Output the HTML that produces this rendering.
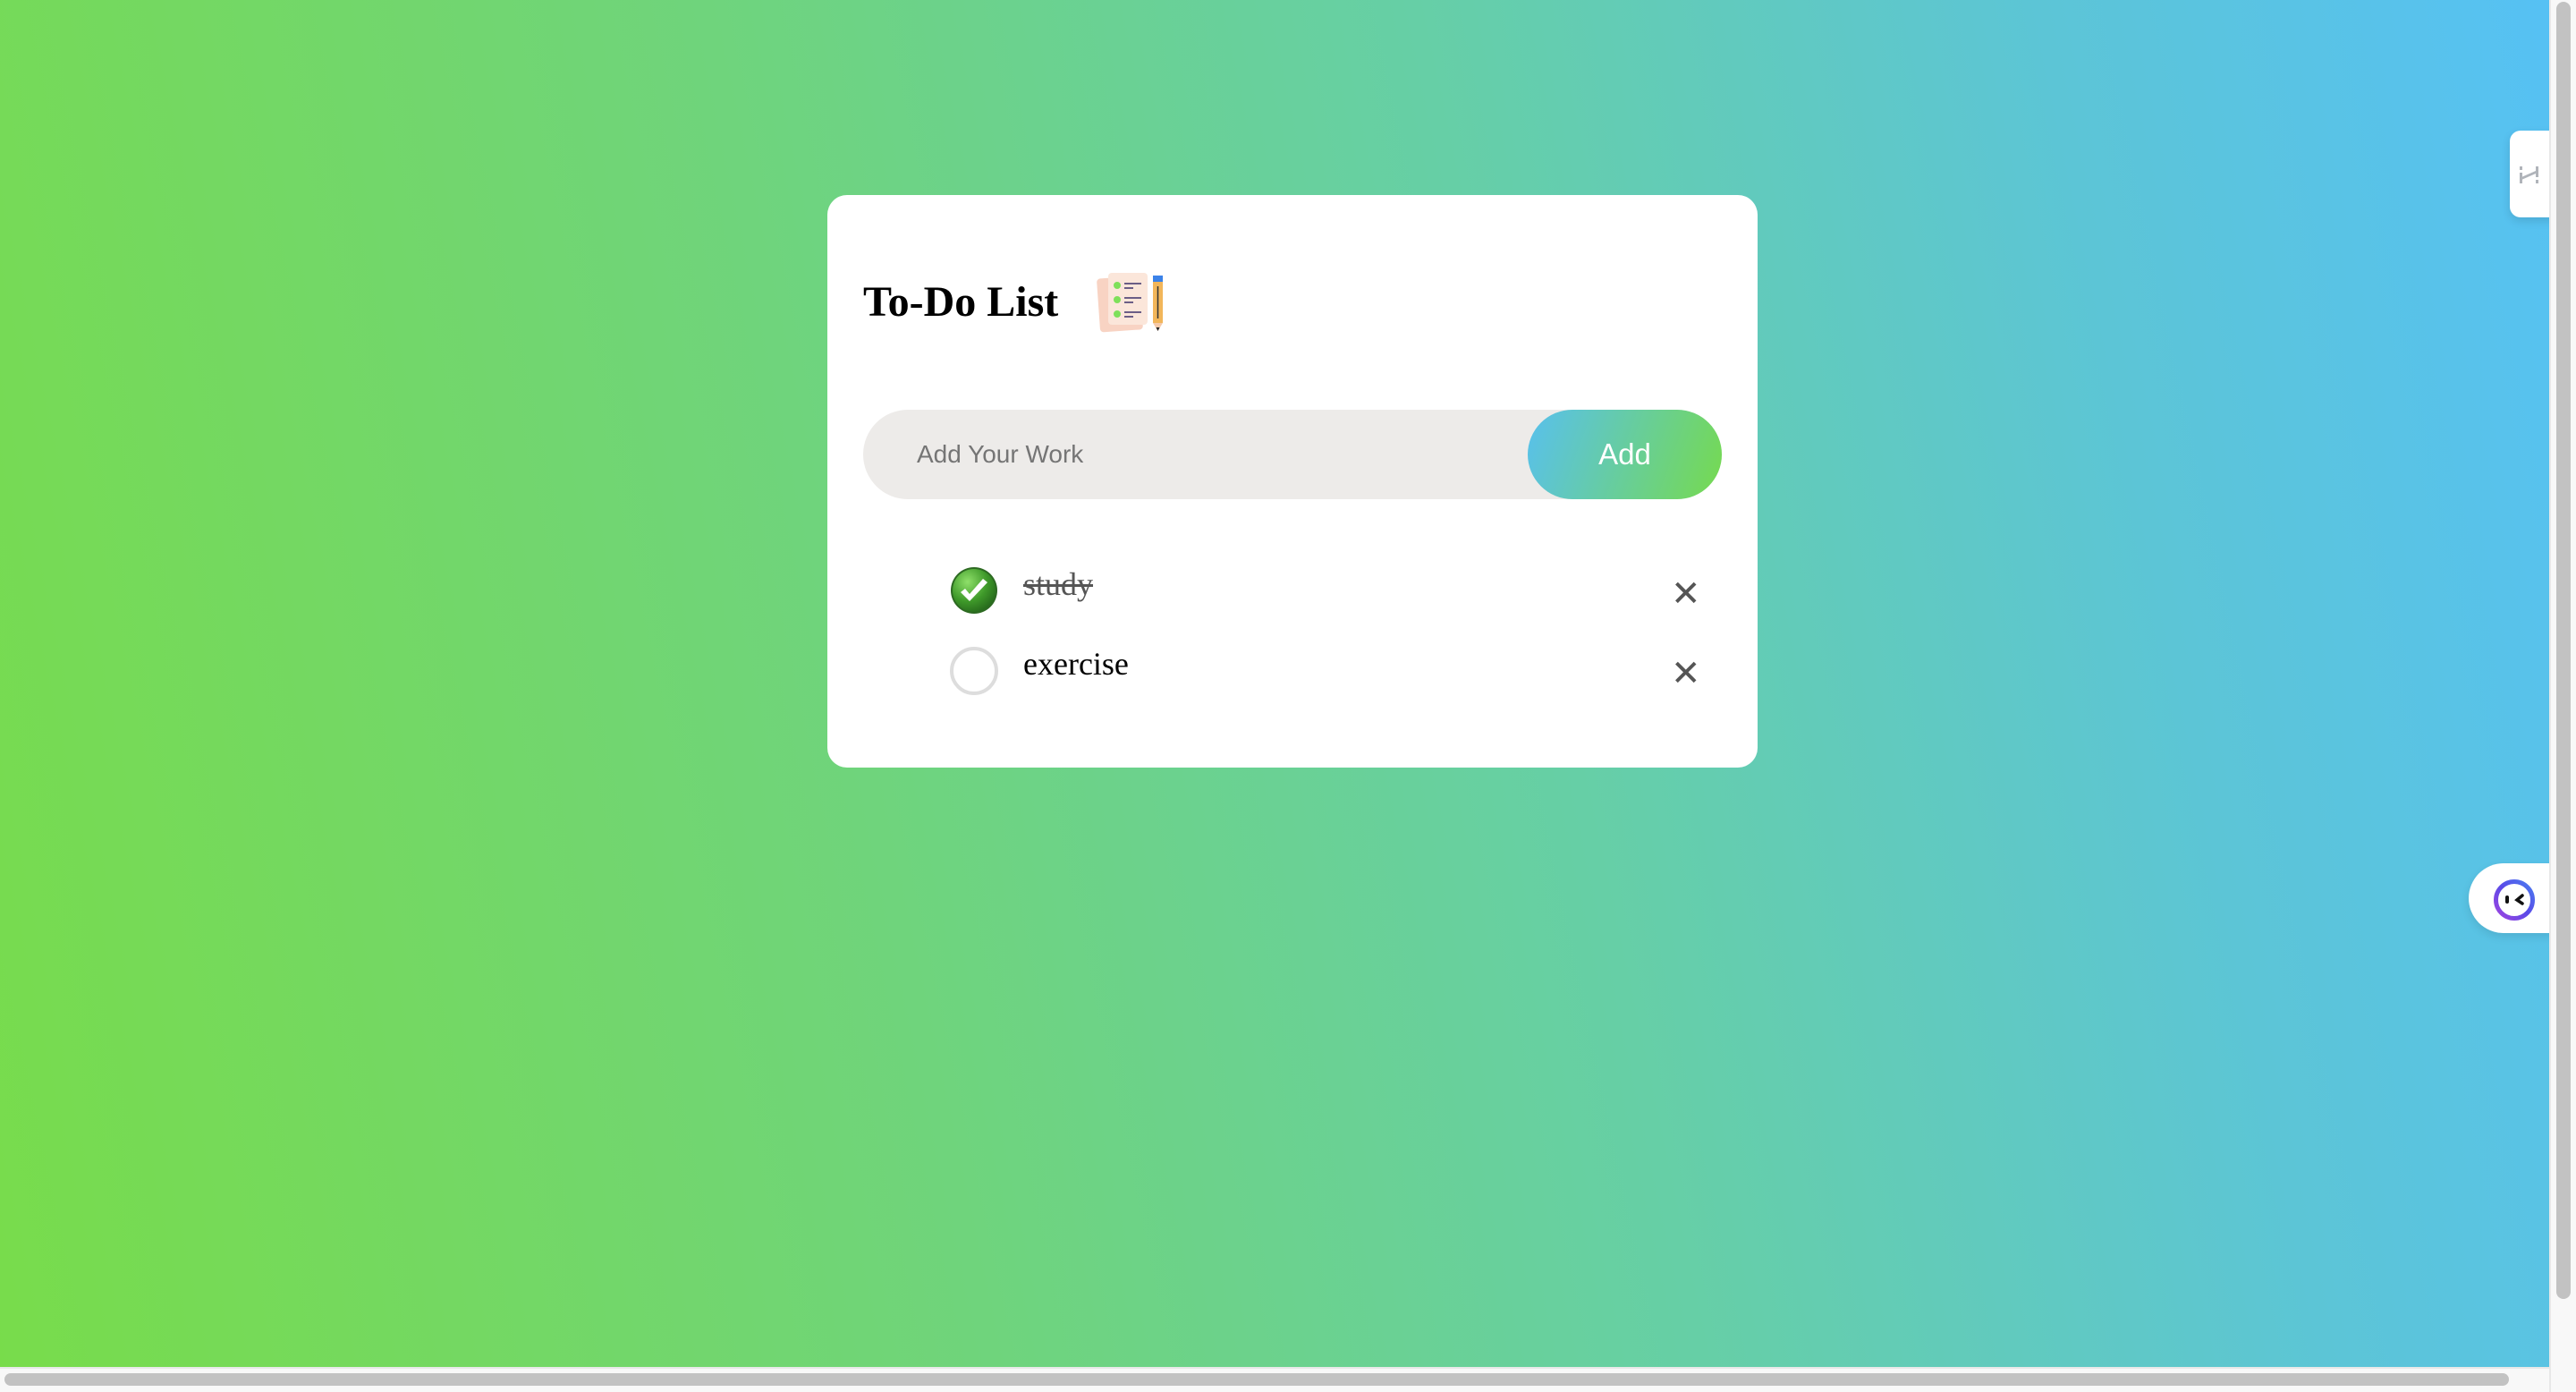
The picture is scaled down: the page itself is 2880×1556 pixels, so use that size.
<!DOCTYPE html>
<html><head><meta charset="utf-8"><style>
html,body{margin:0;padding:0;width:2880px;height:1556px;overflow:hidden;font-family:"Liberation Sans",sans-serif}
.page{position:absolute;left:0;top:0;width:2850px;height:1528px;background:linear-gradient(78deg,#78dc4b 0%,#6fd47c 35%,#66cfa6 60%,#5cc5d6 82%,#56c1f4 100%)}
.vs{position:absolute;left:2850px;top:0;width:30px;height:1556px;background:#f8f8f8;border-left:2px solid #e8e8e8;box-sizing:border-box}
.vt{position:absolute;left:2858px;top:2px;width:16px;height:1450px;border-radius:8px;background:#c2c2c2}
.hs{position:absolute;left:0;top:1528px;width:2850px;height:28px;background:#f8f8f8;border-top:2px solid #e8e8e8;box-sizing:border-box}
.ht{position:absolute;left:5px;top:1535px;width:2800px;height:14px;border-radius:7px;background:#c2c2c2}
.card{position:absolute;left:925px;top:218px;width:1040px;height:640px;background:#fff;border-radius:22px}
h2{position:absolute;left:40px;top:92px;margin:0;font:bold 48px "Liberation Serif",serif;color:#000}
.icon{position:absolute;left:296px;top:78px}
.inp{position:absolute;left:40px;top:240px;width:960px;height:100px;border-radius:50px;background:#edebe9}
.ph{position:absolute;left:60px;top:34px;font-size:28px;color:#757575}
.btn{position:absolute;left:743px;top:0;width:217px;height:100px;border-radius:50px;background:linear-gradient(110deg,#58c0ee,#76da4e);color:#fff;font-size:33px;line-height:100px;text-align:center}
.ck{position:absolute;left:137px;width:54px;height:54px;border-radius:50%;box-sizing:border-box}
.t{position:absolute;left:219px;font:36px "Liberation Serif",serif}
.x{position:absolute;left:943px;font-size:40px;color:#555;line-height:40px}
.w1{position:absolute;left:2806px;top:146px;width:50px;height:97px;background:#fff;border-radius:12px 0 0 12px;box-shadow:0 4px 10px rgba(0,0,0,.12)}
.w2{position:absolute;left:2760px;top:965px;width:95px;height:78px;background:#fff;border-radius:39px 0 0 39px;box-shadow:0 4px 10px rgba(0,0,0,.1)}
</style></head><body>
<div class="page"></div>
<div class="card">
<h2>To-Do List</h2>
<svg class="icon" width="90" height="85" viewBox="0 0 90 85">
<rect x="7" y="14" width="48" height="60" rx="4" fill="#f8d3c3" transform="rotate(-4 30 44)"/>
<rect x="18" y="9" width="44" height="58" rx="4" fill="#fbe6da"/>
<circle cx="28" cy="23" r="4" fill="#7ee05a"/><circle cx="28" cy="39" r="4" fill="#7ee05a"/><circle cx="28" cy="55" r="4" fill="#7ee05a"/>
<g stroke="#6b5e86" stroke-width="2"><line x1="36" y1="21" x2="55" y2="21"/><line x1="36" y1="26" x2="46" y2="26"/><line x1="36" y1="37" x2="55" y2="37"/><line x1="36" y1="42" x2="46" y2="42"/><line x1="36" y1="53" x2="55" y2="53"/><line x1="36" y1="58" x2="46" y2="58"/></g>
<rect x="68" y="12" width="11" height="7" fill="#3b82e8"/><rect x="68" y="19" width="11" height="46" fill="#f2b65a"/>
<line x1="73.5" y1="24" x2="73.5" y2="60" stroke="#333" stroke-width="1.5"/>
<path d="M68 65 L79 65 L73.5 74Z" fill="#f5c9a9"/><path d="M71.5 70 L75.5 70 L73.5 74Z" fill="#222"/>
</svg>
<div class="inp"><div class="ph">Add Your Work</div><div class="btn">Add</div></div>
<svg class="ck" style="top:415px" width="54" height="54" viewBox="0 0 54 54">
<defs><radialGradient id="g" cx="35%" cy="30%" r="75%"><stop offset="0" stop-color="#8fe06a"/><stop offset=".6" stop-color="#3f9a2a"/><stop offset="1" stop-color="#276b1c"/></radialGradient></defs>
<circle cx="27" cy="27" r="26" fill="#2d6a22"/><circle cx="27" cy="27" r="24" fill="url(#g)"/>
<path d="M12 29 L22 39 L42 18 L37 14 L22 31 L17 25Z" fill="#fff"/>
</svg>
<div class="t" style="top:414px;color:#555;text-decoration:line-through">study</div>
<div class="x" style="top:426px">✕</div>
<div class="ck" style="top:505px;border:4px solid #ddd"></div>
<div class="t" style="top:503px;color:#000">exercise</div>
<div class="x" style="top:515px">✕</div>
</div>
<div class="w1"><svg style="position:absolute;left:10px;top:38px" width="24" height="24" viewBox="0 0 24 24"><g fill="#b0b4ba"><rect x="1" y="2" width="3" height="4"/><rect x="1" y="9" width="3" height="12"/><rect x="19" y="2" width="3" height="12"/><rect x="19" y="17" width="3" height="4"/><path d="M3 14 L19 7 L19 10 L3 17Z"/></g></svg></div>
<div class="w2"><svg style="position:absolute;left:28px;top:18px" width="46" height="46" viewBox="0 0 46 46"><defs><linearGradient id="r" x1="0" y1="1" x2="1" y2="0"><stop offset="0" stop-color="#a044e0"/><stop offset=".5" stop-color="#5a4ae8"/><stop offset="1" stop-color="#4a7cf0"/></linearGradient></defs><circle cx="23" cy="23" r="20.5" fill="none" stroke="url(#r)" stroke-width="5"/><rect x="13" y="18" width="4" height="9" rx="2" fill="#111"/><path d="M32 18 L26 23 L32 27" fill="none" stroke="#111" stroke-width="3.5" stroke-linecap="round"/></svg></div>
<div class="vs"></div><div class="vt"></div>
<div class="hs"></div><div class="ht"></div>
</body></html>
